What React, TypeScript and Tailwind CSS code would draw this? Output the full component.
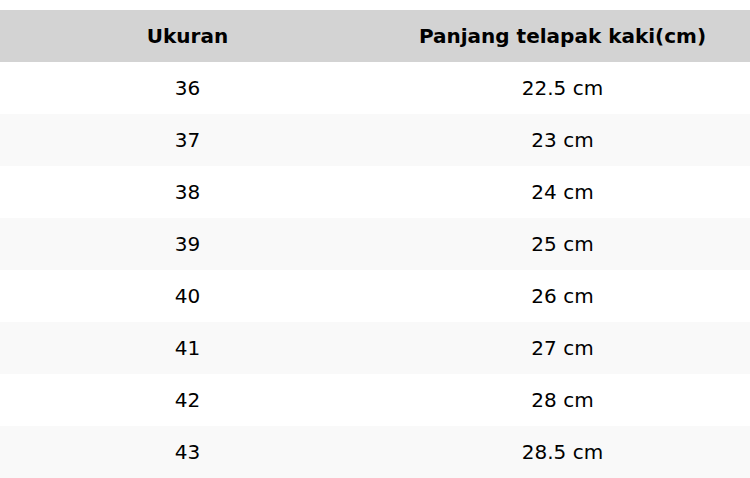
const rows = [
  ["36", "22.5 cm"],
  ["37", "23 cm"],
  ["38", "24 cm"],
  ["39", "25 cm"],
  ["40", "26 cm"],
  ["41", "27 cm"],
  ["42", "28 cm"],
  ["43", "28.5 cm"],
]

export default function App() {
  return (
    <div className="w-[750px] h-[478px] bg-white pt-[10px] text-black font-['DejaVu_Sans',sans-serif] text-[20px]">
      <table className="w-full border-collapse table-fixed">
        <thead>
          <tr className="bg-[#d3d3d3] h-[52px]">
            <th className="font-bold text-center">Ukuran</th>
            <th className="font-bold text-center">Panjang telapak kaki(cm)</th>
          </tr>
        </thead>
        <tbody>
          {rows.map(([size, len], i) => (
            <tr key={size} className={i % 2 === 1 ? "bg-[#f9f9f9] h-[52px]" : "bg-white h-[52px]"}>
              <td className="text-center">{size}</td>
              <td className="text-center">{len}</td>
            </tr>
          ))}
        </tbody>
      </table>
    </div>
  )
}
